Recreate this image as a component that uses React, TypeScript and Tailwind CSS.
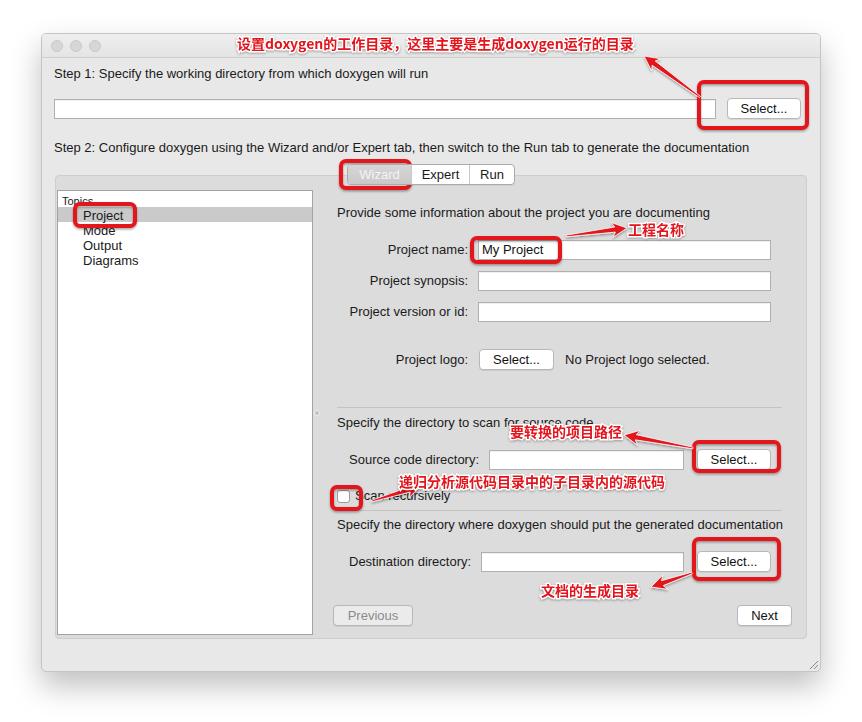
import React from 'react';

const RED = '#e3141c';

function Btn({
  children,
  className = '',
  disabled = false,
}: {
  children: React.ReactNode;
  className?: string;
  disabled?: boolean;
}) {
  return (
    <div
      className={`flex h-[21px] items-center justify-center rounded-[4px] border border-[#b7b7b7] text-[13px] leading-none shadow-[0_1px_0_rgba(0,0,0,0.07)] ${
        disabled ? 'bg-[#ebebeb] text-[#8c8c8c]' : 'bg-white text-[#111]'
      } ${className}`}
    >
      {children}
    </div>
  );
}

function Field({ className = '', children }: { className?: string; children?: React.ReactNode }) {
  return (
    <div
      className={`flex h-[20px] items-center border border-[#b0b0b0] bg-white pl-[3px] text-[13px] text-[#111] shadow-[inset_0_1px_0_rgba(0,0,0,0.06)] ${className}`}
    >
      {children}
    </div>
  );
}

function arrowPts(x1: number, y1: number, x2: number, y2: number) {
  const dx = x2 - x1;
  const dy = y2 - y1;
  const len = Math.hypot(dx, dy);
  const ux = dx / len;
  const uy = dy / len;
  const nx = -uy;
  const ny = ux;
  const hl = 15;
  const hw = 7.5;
  const s0 = 0.8;
  const s1 = 2.6;
  const bx = x2 - ux * hl;
  const by = y2 - uy * hl;
  const nb = 3;
  const pts = [
    [x1 + nx * s0, y1 + ny * s0],
    [bx + ux * nb + nx * s1, by + uy * nb + ny * s1],
    [bx + nx * hw, by + ny * hw],
    [x2, y2],
    [bx - nx * hw, by - ny * hw],
    [bx + ux * nb - nx * s1, by + uy * nb - ny * s1],
    [x1 - nx * s0, y1 - ny * s0],
  ];
  return pts.map((p) => `${p[0].toFixed(1)},${p[1].toFixed(1)}`).join(' ');
}

const boxes = [
  { x: 699, y: 82, w: 108, h: 46 },
  { x: 341, y: 161, w: 69, h: 27 },
  { x: 75, y: 204, w: 60, h: 22 },
  { x: 472, y: 238, w: 88, h: 24 },
  { x: 694, y: 442, w: 85, h: 29 },
  { x: 332, y: 487, w: 29, h: 22 },
  { x: 694, y: 539, w: 85, h: 40 },
];

const arrows: [number, number, number, number][] = [
  [700, 97, 644, 56],
  [566, 236, 627, 228],
  [693, 448, 624, 435],
  [372, 501, 421, 486],
  [692, 573, 651, 587],
];

const notes = [
  { text: '设置doxygen的工作目录，这里主要是生成doxygen运行的目录', x: 237, y: 34 },
  { text: '工程名称', x: 628, y: 220 },
  { text: '要转换的项目路径', x: 510, y: 422 },
  { text: '递归分析源代码目录中的子目录内的源代码', x: 399, y: 472 },
  { text: '文档的生成目录', x: 541, y: 581 },
];

export default function App() {
  return (
    <div className="relative h-[722px] w-[862px] overflow-hidden bg-white pl-[41px] pt-[33px] font-['Liberation_Sans','Noto_Sans_CJK_SC',sans-serif] text-[#1a1a1a]">
      {/* window */}
      <div className="relative flex h-[639px] w-[780px] flex-col overflow-hidden rounded-[5px] border border-[#c4c4c4] bg-[#e8e8e8] shadow-[0_14px_30px_rgba(0,0,0,0.25)]">
        <div className="flex h-[24px] shrink-0 items-center gap-[7px] border-b border-[#cfcfcf] bg-gradient-to-b from-[#efefef] to-[#e4e4e4] pl-[9px]">
          <span className="h-[12px] w-[12px] rounded-full border border-[#c9c9c9] bg-[#d6d6d6]" />
          <span className="h-[12px] w-[12px] rounded-full border border-[#c9c9c9] bg-[#d6d6d6]" />
          <span className="h-[12px] w-[12px] rounded-full border border-[#c9c9c9] bg-[#d6d6d6]" />
        </div>

        <div className="flex flex-1 flex-col whitespace-nowrap pl-[12px] text-[13px]">
          <div className="mt-[8px] leading-[16px]">Step 1: Specify the working directory from which doxygen will run</div>
          <div className="mt-[16px] flex h-[21px] items-center">
            <Field className="w-[662px]" />
            <Btn className="ml-[11px] w-[74px]">Select...</Btn>
          </div>
          <div className="mt-[21px] leading-[16px]">
            Step 2: Configure doxygen using the Wizard and/or Expert tab, then switch to the Run tab to generate the documentation
          </div>

          {/* tab widget */}
          <div className="mt-[8px] ml-[1px] w-[752px]">
            <div className="relative z-10 flex justify-center">
              <div className="flex h-[21px] overflow-hidden rounded-[4px] border border-[#ababab] bg-white text-[13px] leading-none shadow-[0_1px_0_rgba(0,0,0,0.06)]">
                <div className="flex w-[63px] items-center justify-center bg-gradient-to-b from-[#d6d6d6] to-[#c9c9c9] text-[#f4f4f4]">
                  Wizard
                </div>
                <div className="flex w-[58px] items-center justify-center border-l border-[#c9c9c9]">Expert</div>
                <div className="flex w-[45px] items-center justify-center border-l border-[#c9c9c9]">Run</div>
              </div>
            </div>
            <div className="-mt-[10px] flex h-[464px] rounded-[4px] border border-[#cdcdcd] bg-[#dcdcdc] pl-[1px] pt-[14px]">
              {/* topics list */}
              <div className="h-[445px] w-[256px] border border-[#a3a3a3] bg-white">
                <div className="h-[16px] overflow-hidden pl-[4px] pt-[3px] text-[11px] leading-[14px]">Topics</div>
                <div className="h-[15px] bg-[#cacaca] pl-[25px] pt-[1px] leading-[16px]">Project</div>
                <div className="h-[15px] pl-[25px] pt-[1px] leading-[16px]">Mode</div>
                <div className="h-[15px] pl-[25px] pt-[1px] leading-[16px]">Output</div>
                <div className="h-[15px] pl-[25px] pt-[1px] leading-[16px]">Diagrams</div>
              </div>
              {/* splitter */}
              <div className="flex h-[445px] w-[24px] items-center pl-[1px]">
                <span className="h-[6px] w-[6px] rounded-full border border-[#f2f2f2] bg-[#c2c2c2]" />
              </div>

              {/* wizard page */}
              <div className="flex w-[445px] flex-col">
                <div className="mt-[15px] leading-[16px]">Provide some information about the project you are documenting</div>
                <div className="mt-[19px] flex h-[20px] items-center">
                  <div className="w-[131px] text-right">Project name:</div>
                  <Field className="ml-[10px] w-[293px]">My Project</Field>
                </div>
                <div className="mt-[11px] flex h-[20px] items-center">
                  <div className="w-[131px] text-right">Project synopsis:</div>
                  <Field className="ml-[10px] w-[293px]" />
                </div>
                <div className="mt-[11px] flex h-[20px] items-center">
                  <div className="w-[131px] text-right">Project version or id:</div>
                  <Field className="ml-[10px] w-[293px]" />
                </div>
                <div className="mt-[27px] flex h-[21px] items-center">
                  <div className="w-[131px] text-right">Project logo:</div>
                  <Btn className="ml-[11px] w-[75px]">Select...</Btn>
                  <div className="ml-[11px]">No Project logo selected.</div>
                </div>
                <div className="mt-[37px] border-t border-[#c3c3c3]" />
                <div className="mt-[7px] leading-[16px]">Specify the directory to scan for source code</div>
                <div className="mt-[18px] flex h-[21px] items-center">
                  <div className="w-[152px] pl-[12px]">Source code directory:</div>
                  <Field className="w-[195px]" />
                  <Btn className="ml-[13px] w-[74px]">Select...</Btn>
                </div>
                <div className="mt-[18px] flex h-[16px] items-center">
                  <span className="h-[13px] w-[13px] rounded-[3px] border border-[#9c9c9c] bg-white" />
                  <span className="ml-[5px] leading-[16px]">Scan recursively</span>
                </div>
                <div className="mt-[6px] border-t border-[#c3c3c3]" />
                <div className="mt-[6px] leading-[16px]">Specify the directory where doxygen should put the generated documentation</div>
                <div className="mt-[18px] flex h-[21px] items-center">
                  <div className="w-[144px] pl-[12px]">Destination directory:</div>
                  <Field className="w-[203px]" />
                  <Btn className="ml-[13px] w-[74px]">Select...</Btn>
                </div>
                <div className="-ml-[4px] mt-[33px] flex w-[459px] justify-between">
                  <Btn disabled className="w-[80px]">
                    Previous
                  </Btn>
                  <Btn className="w-[55px]">Next</Btn>
                </div>
              </div>
            </div>
          </div>
        </div>

        {/* resize grip */}
        <svg className="absolute bottom-[2px] right-[2px]" width="10" height="10" viewBox="0 0 10 10">
          <path d="M2 10 L10 2 M6 10 L10 6" stroke="#8a8a8a" strokeWidth="1" />
        </svg>
      </div>

      {/* annotations */}
      <svg className="pointer-events-none absolute left-0 top-0" width="862" height="722" viewBox="0 0 862 722">
        <defs>
          <filter id="sh" x="-20%" y="-20%" width="140%" height="140%">
            <feDropShadow dx="0" dy="1.5" stdDeviation="1.2" floodColor="#000" floodOpacity="0.35" />
          </filter>
        </defs>
        <g filter="url(#sh)">
          {boxes.map((b, i) => (
            <rect key={i} x={b.x} y={b.y} width={b.w} height={b.h} rx={5} fill="none" stroke={RED} strokeWidth={4} />
          ))}
          {arrows.map((a, i) => (
            <polygon key={i} points={arrowPts(a[0], a[1], a[2], a[3])} fill={RED} stroke="#fff" strokeWidth={0.8} />
          ))}
        </g>
      </svg>
      {notes.map((n, i) => (
        <div
          key={i}
          className="absolute whitespace-nowrap font-['Noto_Sans_CJK_SC',sans-serif] text-[14px] font-bold leading-[18px] text-[#e3141c] [-webkit-text-stroke:3px_#ffffff] [paint-order:stroke_fill] drop-shadow-[0_1px_1px_rgba(0,0,0,0.3)]"
          style={{ left: n.x, top: n.y }}
        >
          {n.text}
        </div>
      ))}
    </div>
  );
}
